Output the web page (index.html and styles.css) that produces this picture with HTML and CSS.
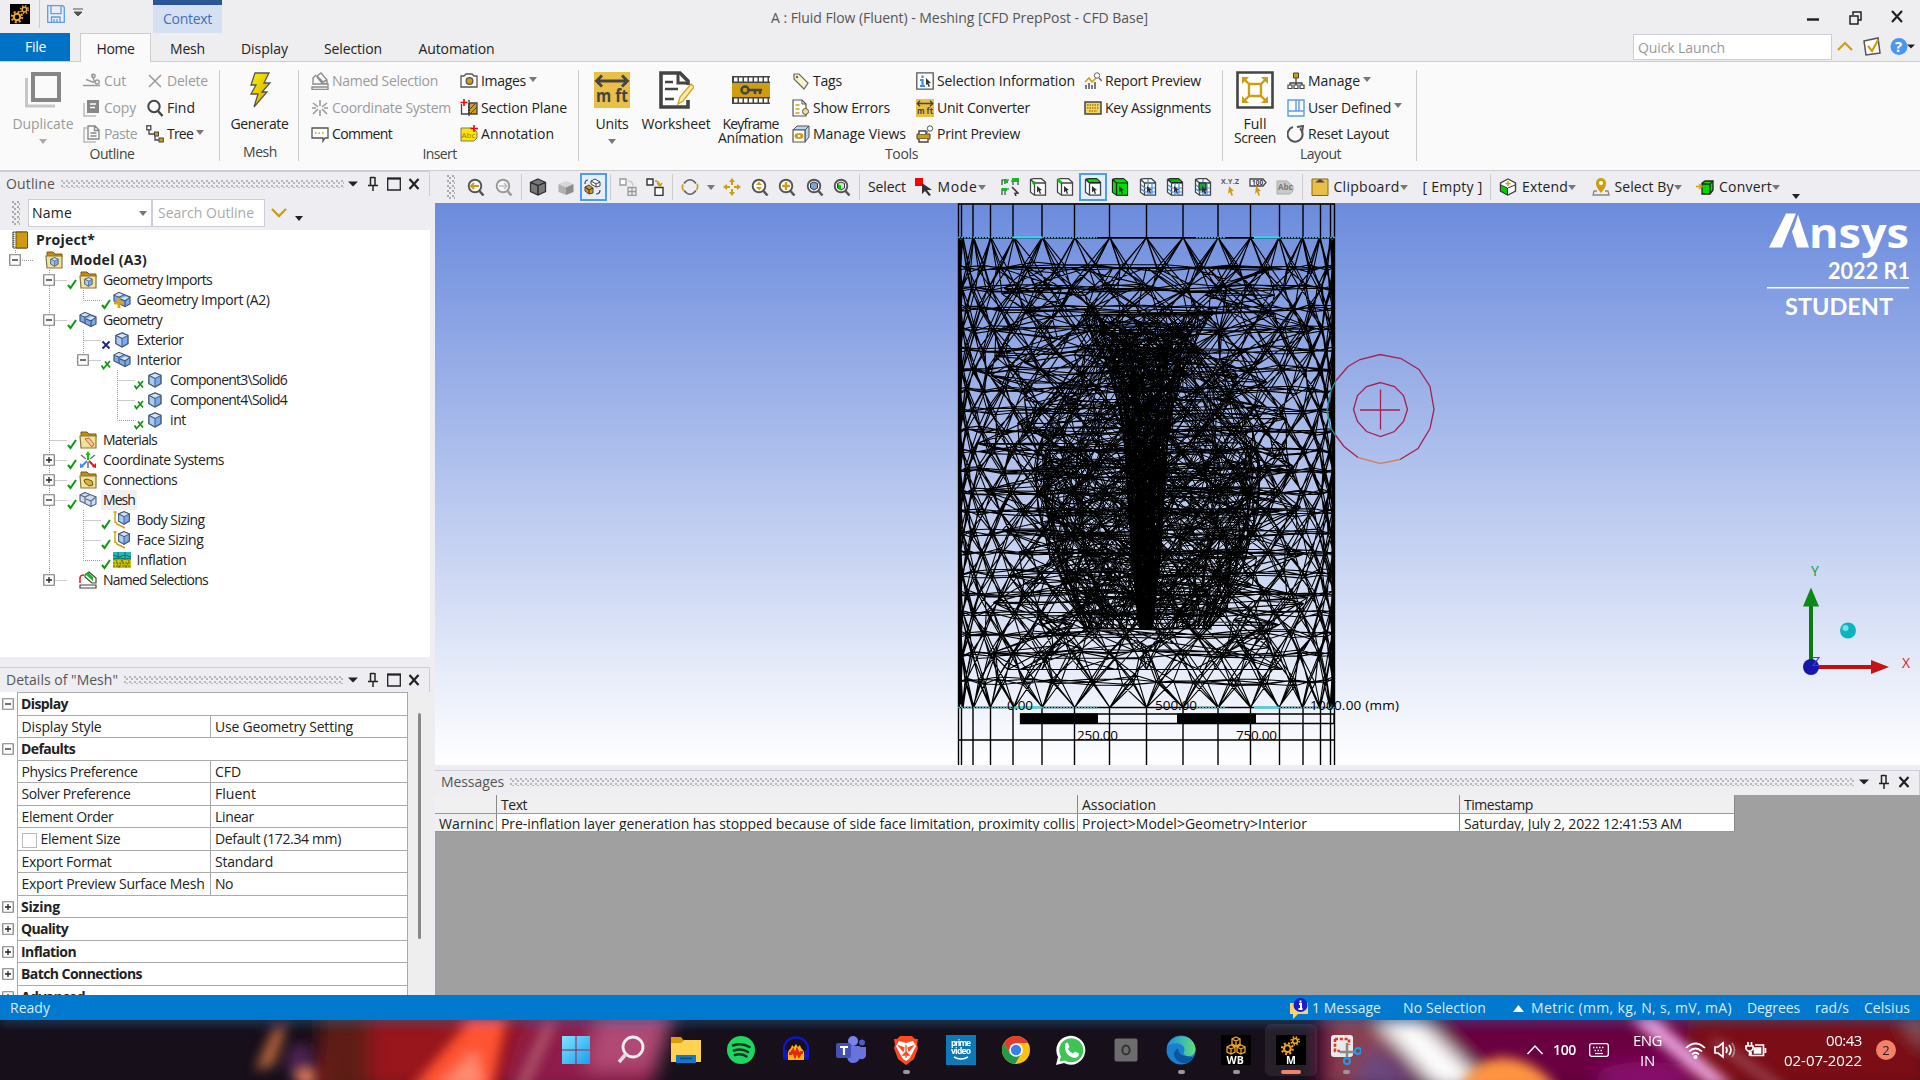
FILE: index.html
```html
<!DOCTYPE html>
<html lang="en">
<head>
<meta charset="utf-8">
<title>A : Fluid Flow (Fluent) - Meshing</title>
<link rel="stylesheet" href="styles.css">
</head>
<body>
<svg class="paints" width="0" height="0">
  <defs>
    <linearGradient id="bolt" x1="0" y1="0" x2="1" y2="1"><stop offset="0" stop-color="#fff200"/><stop offset="1" stop-color="#c9a200"/></linearGradient>
    <linearGradient id="sky" x1="0" y1="0" x2="0" y2="1"><stop offset="0" stop-color="#6b8bdd"/><stop offset="1" stop-color="#fff"/></linearGradient>
    <linearGradient id="edgeg" x1="0" y1="0" x2="1" y2="0"><stop offset="0" stop-color="#1b8fe0"/><stop offset="1" stop-color="#5fe07a"/></linearGradient>
    <linearGradient id="win" x1="0" y1="0" x2="1" y2="1"><stop offset="0" stop-color="#7fe4ff"/><stop offset="1" stop-color="#1a9df0"/></linearGradient>
    <filter id="soft" x="-20%" y="-60%" width="140%" height="220%"><feGaussianBlur stdDeviation="9"/></filter>
    <filter id="soft2" x="-20%" y="-60%" width="140%" height="220%"><feGaussianBlur stdDeviation="6"/></filter>
  </defs>
</svg>
<svg class="symbols">
  <symbol id="gears" viewBox="0 0 20 20"><g fill="none" stroke="#f2a81d"><circle cx="7" cy="13" r="3.2" stroke-width="2"/><circle cx="7" cy="13" r="5.2" stroke-width="2" stroke-dasharray="2 2.08"/><circle cx="14.4" cy="5.6" r="2.3" stroke-width="1.5"/><circle cx="14.4" cy="5.6" r="3.8" stroke-width="1.5" stroke-dasharray="1.5 1.5"/></g></symbol>
  <symbol id="save" viewBox="0 0 18 18"><path d="M.7.7h15l1.6 1.6v15H.7zM4 .7v8h10v-8M4.5 17v-5h8.500v5M7 17v-3M10 17v-3" fill="none" stroke="#5b9bf0" stroke-width="1.3"/></symbol>
  <symbol id="dup" viewBox="0 0 36 36"><path d="M1.500 6v28H30" fill="none" stroke="#c6c6c6" stroke-width="3"/><rect x="8" y="2" width="26" height="26" fill="none" stroke="#868686" stroke-width="4"/></symbol>
  <symbol id="cut" viewBox="0 0 18 18"><g fill="none" stroke="#9a9a9a" stroke-width="1.5"><path d="M0 13.500h17M3 7.500 11 10.500M9 2l2.500 8"/><circle cx="10.500" cy="4" r="1.700"/><circle cx="14.200" cy="10" r="2"/></g></symbol>
  <symbol id="copy" viewBox="0 0 18 18"><path d="M1 4v13h12" fill="none" stroke="#bbb" stroke-width="1.5"/><path d="M4 1h12v13H4z" fill="#888"/><path d="M7 5h6M7 8.500h5" stroke="#fff" stroke-width="1.5"/></symbol>
  <symbol id="paste" viewBox="0 0 18 18"><path d="M4 3H1v14h12" fill="none" stroke="#bbb" stroke-width="1.500"/><path d="M5 1h7l4 4v9H5zM11.500 1v4.500H16M7.500 8h6M7.500 11h6" fill="none" stroke="#888" stroke-width="1.400"/></symbol>
  <symbol id="del" viewBox="0 0 18 18"><path d="m3 3 12 12M15 3 3 15" stroke="#9a9a9a" stroke-width="1.500"/></symbol>
  <symbol id="find" viewBox="0 0 18 18"><circle cx="8" cy="7.500" r="5.700" fill="none" stroke="#454545" stroke-width="2"/><path d="m12 12 4.500 5" stroke="#454545" stroke-width="2.500"/></symbol>
  <symbol id="treei" viewBox="0 0 18 18"><path d="M3 4v5h6v6h4M9 9h2" fill="none" stroke="#444" stroke-width="1.300"/><rect x=".8" y=".8" width="4" height="4" fill="#fff" stroke="#444" stroke-width="1.300"/><rect x="8.500" y="7" width="4" height="4" fill="#cf9d12" stroke="#444"/><rect x="13" y="13" width="4.300" height="4" fill="#cf9d12" stroke="#444"/></symbol>
  <symbol id="gen" viewBox="0 0 24 36"><path d="M7 1h14l-5 10h6l-8 9h5L6 35l4-13H3l5-9H3z" fill="url(#bolt)" stroke="#555" stroke-width="1.300"/></symbol>
  <symbol id="named" viewBox="0 0 18 18"><path d="M1 15h16v2.500H1zM1 12h16v2M6 4l4-3 6 7v4l-5-1-5-6zM6 4l6 6 4-2M2 11V6l3-3" fill="none" stroke="#8d8d8d" stroke-width="1.400"/></symbol>
  <symbol id="coordg" viewBox="0 0 18 18"><path d="M9 1v6M9 11v6M2 4l5 4M16 4l-5 4M2 15l5-5M16 15l-5-5M1 9h4M13 9h4" stroke="#9a9a9a" stroke-width="1.600"/></symbol>
  <symbol id="comment" viewBox="0 0 18 18"><path d="M1 3h16v10h-3l-2 3v-3H1z" fill="#fff" stroke="#555" stroke-width="1.300"/><path d="M4 8h9" stroke="#cf9d12" stroke-width="1.500" stroke-dasharray="1.500 2"/></symbol>
  <symbol id="camera" viewBox="0 0 18 18"><path d="M1 4h3l2-2h6l2 2h3v11H1z" fill="#fff" stroke="#555" stroke-width="1.300"/><circle cx="9.500" cy="9" r="4" fill="#555"/><circle cx="9.500" cy="9" r="2.700" fill="#cf9d12"/></symbol>
  <symbol id="section" viewBox="0 0 18 18"><path d="M1.500 5v10H9V4" fill="none" stroke="#444" stroke-width="1.300"/><path d="M9 4h8v11H9z" fill="#cf9d12" stroke="#444" stroke-width="1.300"/><path d="m9 11 6-6M10 15l7-7" stroke="#444"/><path d="M9 1v16" stroke="#333" stroke-width="1.300" stroke-dasharray="2 1"/><path d="M4 0v7M.5 3.500h7" stroke="#f00" stroke-width="1.600"/></symbol>
  <symbol id="annot" viewBox="0 0 18 18"><path d="M1 3h11l5 4v6l-3 3H1z" fill="#ffe600" stroke="#777"/><text x="1.500" y="12.500" font-size="8" font-family="Open Sans" fill="#917a00">Abc</text><path d="M14 0v7M10.500 3.500H18" stroke="#f00" stroke-width="1.600"/></symbol>
  <symbol id="units" viewBox="0 0 36 36"><path d="M0 0h36v36H0z" fill="#e8bf48"/><path d="M3 9h30M8 3.500 2.500 9 8 14.500M28 3.500 33.500 9 28 14.500" fill="none" stroke="#444" stroke-width="2.800"/><text x="2" y="30" font-size="18" font-weight="700" font-family="Open Sans" fill="#444" textLength="32" lengthAdjust="spacingAndGlyphs">m ft</text></symbol>
  <symbol id="worksheet" viewBox="0 0 36 38"><path d="M30 14v-4l-8-8H3v34h27v-7" fill="#fff" stroke="#444" stroke-width="3.600"/><path d="M20 2v10h10" fill="none" stroke="#444" stroke-width="3"/><path d="M7 11h8M7 18h13M7 28h9" stroke="#444" stroke-width="2.400"/><path d="m20 33 2-7 11-13 3 3-11 14z" fill="#fbe9b8" stroke="#d5a21b" stroke-width="1.300"/></symbol>
  <symbol id="keyframe" viewBox="0 0 38 28"><path d="M0 0h38v28H0z" fill="#444"/><path d="M0 7h38v14H0z" fill="#cf9d12"/><path d="M2 3.500h36M2 24.500h36" stroke="#fff" stroke-width="4" stroke-dasharray="3.500 1.500"/><circle cx="13" cy="14" r="3.500" fill="none" stroke="#444" stroke-width="2.500"/><path d="M16 14h14M23 14v4M28 14v4" stroke="#444" stroke-width="2.500"/></symbol>
  <symbol id="tag" viewBox="0 0 18 18"><path d="M2 2h5l9 9-4 6-10-10z" fill="#fdf3c8" stroke="#666" stroke-width="1.200"/><circle cx="5" cy="5" r="1.200" fill="#666"/></symbol>
  <symbol id="showerr" viewBox="0 0 18 18"><path d="M1 1h9l4 4v12H1z" fill="#fff" stroke="#555" stroke-width="1.200"/><path d="M3.500 6h4M3.500 10h4M3.500 14h4" stroke="#cf9d12" stroke-width="1.400"/><path d="M10 1v4h4" fill="none" stroke="#555"/><circle cx="13.500" cy="12.500" r="3" fill="#f5dc8a" stroke="#555"/></symbol>
  <symbol id="views" viewBox="0 0 18 18"><path d="m1 5 4-4h12l-4 4zM13 5l4-4v11l-4 5z" fill="#bcd4f4" stroke="#555"/><path d="M1 5h12v12H1z" fill="#fff" stroke="#555" stroke-width="1.200"/><ellipse cx="7" cy="11" rx="4.500" ry="3" fill="#cf9d12"/><circle cx="7" cy="11" r="1.300" fill="#fff"/></symbol>
  <symbol id="selinfo" viewBox="0 0 18 18"><path d="M.8.8h16.400v16.400H.8z" fill="#fff" stroke="#555" stroke-width="1.300"/><path d="M4 8h2.500v6M4 14h5M6.500 3.500v2.500" stroke="#3d8bf2" stroke-width="2.200" fill="none"/><path d="m10 6 5 5-2.500.3 1.500 3-1.300.7-1.400-3L10 13z" fill="#333"/></symbol>
  <symbol id="printp" viewBox="0 0 18 18"><path d="M1 9h13v5H1z" fill="#cf9d12" stroke="#444"/><path d="M3 9V6h7v3M3 14v3h9v-3" fill="#fff" stroke="#444" stroke-width="1.400"/><circle cx="14" cy="3.500" r="2.700" fill="none" stroke="#555"/><path d="m12 6-2 3" stroke="#555"/></symbol>
  <symbol id="report" viewBox="0 0 18 18"><path d="M2 17v-4M5 17v-6M8 17v-4M11 17v-7" stroke="#444" stroke-width="1.400"/><path d="m1 10 4-4 3 4 5-5" stroke="#cf9d12" stroke-width="1.500" fill="none"/><circle cx="13" cy="3.500" r="2.700" fill="#fff" stroke="#666"/><path d="m15 6 3 3" stroke="#666" stroke-width="1.500"/></symbol>
  <symbol id="keys" viewBox="0 0 18 18"><path d="M1 3h16v12H1z" fill="#f4d46a" stroke="#444" stroke-width="1.500"/><path d="M3 6h12M3 9h12M5 12h8" stroke="#a67b00" stroke-width="1.500" stroke-dasharray="1.500 1"/></symbol>
  <symbol id="full" viewBox="0 0 38 38"><path d="M1.500 1.500h35v35h-35z" fill="#fff" stroke="#444" stroke-width="2.600"/><path d="M13 13h12v12H13zM13 13 8 8M25 13l5-5M13 25l-5 5M25 25l5 5" fill="none" stroke="#cf9d12" stroke-width="2.400"/><path d="M6 6h7l-7 7zM32 6h-7l7 7zM6 32h7l-7-7zM32 32h-7l7-7z" fill="#cf9d12"/></symbol>
  <symbol id="manage" viewBox="0 0 18 18"><path d="M9 6v5M3 14v-3h12v3M9 11v3" fill="none" stroke="#444" stroke-width="1.300"/><path d="M6.500 1h5v5h-5z" fill="#cf9d12" stroke="#444"/><path d="M1 13h4v3.500H1zM7 13h4v3.500H7zM13 13h4v3.500h-4z" fill="#fff" stroke="#444" stroke-width="1.200"/></symbol>
  <symbol id="userdef" viewBox="0 0 18 18"><path d="M1 1h16v16H1zM1 12h16M9 1v11M12 1v11" fill="none" stroke="#5b9bf0" stroke-width="1.400"/></symbol>
  <symbol id="reset" viewBox="0 0 18 18"><path d="M6 2A7.500 7.500 0 1 0 13 3.500" fill="none" stroke="#555" stroke-width="2"/><path d="m10 2 6-1-1 6" fill="none" stroke="#555" stroke-width="2"/></symbol>
  <symbol id="mag" viewBox="0 0 18 18"><circle cx="8" cy="8" r="6.300" fill="#fff" stroke="#555" stroke-width="1.900"/><path d="m12.500 13 4 4.500" stroke="#555" stroke-width="2.500"/></symbol>
  <symbol id="zprev" viewBox="0 0 18 18"><use href="#mag"/><path d="M4 8h8M7 5 4 8l3 3" stroke="#cf9d12" stroke-width="2" fill="none"/></symbol>
  <symbol id="znext" viewBox="0 0 18 18"><g opacity=".55"><use href="#mag"/><path d="M4 8h8M9 5l3 3-3 3" stroke="#999" stroke-width="1.500" fill="none"/></g></symbol>
  <symbol id="zfit" viewBox="0 0 18 18"><use href="#mag"/><path d="M8 3.500 5 7h6zM8 12.500 5 9h6z" fill="#cf9d12"/></symbol>
  <symbol id="zin" viewBox="0 0 18 18"><use href="#mag"/><path d="M8 4v8M4 8h8" stroke="#cf9d12" stroke-width="2.400"/></symbol>
  <symbol id="zbox" viewBox="0 0 18 18"><use href="#mag"/><path d="m8 4 3.500 1.500v4.500L8 12l-3.500-2V5.500z" fill="#7ba4df" stroke="#333"/></symbol>
  <symbol id="zgreen" viewBox="0 0 18 18"><use href="#mag"/><path d="m8 4 3.500 1.500v4.500L8 12l-3.500-2V5.500z" fill="#ddd" stroke="#333"/><path d="M5 6l3 1.500V12l-3-2z" fill="#0c0"/></symbol>
  <symbol id="cubed" viewBox="0 0 18 18"><path d="m9 1 7.500 3.500v9L9 17l-7.500-3.500v-9z" fill="#777" stroke="#333" stroke-width="1.300"/><path d="m1.500 4.500 7.500 3v9.500M9 7.500l7.500-3" fill="none" stroke="#222" stroke-width="1.300"/></symbol>
  <symbol id="cubel" viewBox="0 0 18 18"><path d="m9 3 7.500 3L9 9.500 1.500 6z" fill="#d5d5d5"/><path d="M1.500 6 9 9.500V17l-7.500-3z" fill="#b0b0b0"/><path d="M16.500 6 9 9.500V17l7.500-3z" fill="#8c8c8c"/></symbol>
  <symbol id="swap" viewBox="0 0 18 18"><path d="m7 3 4-2 5 3v4l-4 1-5-3zM7 3l5 3 4-2M12 6v3" fill="#fff" stroke="#444"/><path d="m1 9 4-2 4 3v5l-4 1-4-3z" fill="#cf9d12" stroke="#444"/><path d="M1 9l4 3 4-2M5 12v4M1 6q0-4 3-4M12 16q4 0 4-4" fill="none" stroke="#444" stroke-width="1.200"/></symbol>
  <symbol id="boxa" viewBox="0 0 18 18"><path d="M1 1h6v6H1z" fill="#fff" stroke="#999" stroke-width="1.300"/><path d="M9 9.500h8v8H9zM13 9v8M9 13.500h8" fill="none" stroke="#999" stroke-width="1.300"/><path d="M9 3q5 0 5 5" fill="none" stroke="#ccc" stroke-width="1.600"/></symbol>
  <symbol id="boxb" viewBox="0 0 18 18"><path d="M1 1h6v6H1zM9 9.500h8v8H9z" fill="#fff" stroke="#333" stroke-width="1.400"/><path d="M9 3q4 0 4.500 4M11 5l3 3 2-3" fill="none" stroke="#cf9d12" stroke-width="1.600"/></symbol>
  <symbol id="rot" viewBox="0 0 18 18"><path d="M3 5.500Q9-2 15 5.500M15 12.500q-6 7.500-12 0" fill="none" stroke="#666" stroke-width="1.700"/><path d="M2 6.500q-1.500 3 .5 6M16 6q1.500 3-.5 6" fill="none" stroke="#cf9d12" stroke-width="1.700"/></symbol>
  <symbol id="pan" viewBox="0 0 18 18"><path d="m9 0 3 4H6zM9 18l3-4H6zM0 9l4-3v6zM18 9l-4-3v6z" fill="#cf9d12"/><path d="M9 4v3M9 11v3M4 9h3M11 9h3" stroke="#cf9d12" stroke-width="2"/></symbol>
  <symbol id="modei" viewBox="0 0 18 18"><path d="M0 0h8v8H0z" fill="#f00"/><path d="m7 5 10 7h-5l4 5-2 1-4-5-3 3z" fill="#333"/></symbol>
  <symbol id="cur" viewBox="0 0 18 18"><path d="m8 8 5 4-2 .5 1 3-1.200.5-1.100-3L8 14.500z" fill="#333"/></symbol>
  <symbol id="wire" viewBox="0 0 18 18"><path d="m1.500 1.500 3-.8h8l4 3.500v13h-11l-4-3zM1.500 1.500 5.500 5h11M5.500 5v12" fill="#fff" stroke="#444" stroke-width="1.300"/></symbol>
  <symbol id="sfil" viewBox="0 0 18 18"><path d="M1 7V2h7M10 3h7v4M1 17v-6h7M4 1v5M12 1v6M4 10v7" fill="none" stroke="#444" stroke-width="1.200"/><path d="M11 0h7v4h-7zM1 10h5v3H1zM3 2h4v3H3z" fill="#16b72b"/><path d="m11 9 6 6-3 .3 1 3" stroke="#333" fill="none" stroke-width="1.500"/></symbol>
  <symbol id="sv" viewBox="0 0 18 18"><use href="#wire"/><circle cx="5" cy="5" r="1.800" fill="#0b0"/><use href="#cur"/></symbol>
  <symbol id="se" viewBox="0 0 18 18"><use href="#wire"/><path d="M1.500 1.500 5.500 5" stroke="#0c0" stroke-width="2.500"/><use href="#cur"/></symbol>
  <symbol id="sf" viewBox="0 0 18 18"><use href="#wire"/><path d="m2 1.500 3-.8h8l3.500 3.800h-11z" fill="#0d0" stroke="#222"/><use href="#cur"/></symbol>
  <symbol id="sb" viewBox="0 0 18 18"><use href="#wire"/><path d="m1.500 1.500 3-.8h8l4 3.500v13h-11l-4-3z" fill="#0d0" stroke="#222"/><path d="M1.500 1.500 5.500 5h11M5.500 5v12" fill="none" stroke="#222" stroke-width="1.200"/><use href="#cur"/></symbol>
  <symbol id="sn" viewBox="0 0 18 18"><use href="#wire"/><path d="M9 1v16M13 4v13M2 7l4 3h10M2 11l4 3h10" stroke="#3f8bea" stroke-width="1.200" fill="none"/><use href="#cur"/></symbol>
  <symbol id="snf" viewBox="0 0 18 18"><use href="#sn"/><path d="m2 1.500 3-.8h8l3.500 3.800h-11z" fill="#0b0" stroke="#222"/></symbol>
  <symbol id="sne" viewBox="0 0 18 18"><use href="#sn"/><path d="M5 5h7v7H5z" fill="#15a92a" stroke="#222"/><use href="#cur"/></symbol>
  <symbol id="xyz" viewBox="0 0 18 18"><text x="0" y="6" font-size="7" font-family="Open Sans" fill="#555" textLength="18">X.Y.Z</text><path d="m8 8 5 5-2.500.3 1.500 4-1.500.7-1.500-4L7 16z" fill="#cf9d12"/></symbol>
  <symbol id="lbl" viewBox="0 0 18 18"><path d="M1 1h13l3 3.500L14 8H1z" fill="#fff" stroke="#444" stroke-width="1.300"/><text x="3" y="7" font-size="6.500" font-weight="700" font-family="Open Sans" fill="#333">100</text><path d="m7 8 5 5-2.500.3 1.500 4-1.500.7-1.500-4L6 16z" fill="#cf9d12"/></symbol>
  <symbol id="abc" viewBox="0 0 18 18"><path d="M1 3h10l6 5v5l-3 3H1z" fill="#c9c9c9" stroke="#aaa"/><text x="2" y="12" font-size="8" font-family="Open Sans" fill="#777">Abc</text></symbol>
  <symbol id="clip" viewBox="0 0 18 18"><path d="M1 1h16v16.500H1z" fill="#e8bf48" stroke="#8a6a10"/><path d="M4 4.500h10L9 1z" fill="#444"/></symbol>
  <symbol id="extend" viewBox="0 0 18 18"><path d="m9 1 7.500 4v8L9 17l-7.500-4V5z" fill="#fff" stroke="#444" stroke-width="1.400"/><path d="m1.500 7 7 3v7l-7-4z" fill="#0c0" stroke="#333"/><path d="m9 10 7-3" stroke="#333"/><path d="M9 3v5M6.500 5.500h5" stroke="#cf9d12" stroke-width="1.400"/></symbol>
  <symbol id="pinm" viewBox="0 0 18 18"><path d="M9 15C4 9 4 7 4 5a5 5 0 0 1 10 0c0 2 0 4-5 10z" fill="#cf9d12"/><circle cx="9" cy="5" r="2" fill="#fff"/><path d="M5 13H2l-1 4h16l-1-4h-3" fill="none" stroke="#888" stroke-width="1.300"/></symbol>
  <symbol id="conv" viewBox="0 0 18 18"><path d="m6 5 3-2h8v9l-3 4H6z" fill="#0d0" stroke="#222" stroke-width="1.300"/><path d="M6 6h8v10M14 6l3-3" fill="none" stroke="#222" stroke-width="1.300"/><path d="M0 8.500h5M3 6l3 2.500L3 11" stroke="#cf9d12" stroke-width="1.500" fill="none"/></symbol>
  <symbol id="book" viewBox="0 0 18 18"><path d="M2 1h14v16H2z" fill="#fff" stroke="#555"/><path d="M5 1h11.500v16H5z" fill="#cf9a0e" stroke="#6d5308"/><path d="M2.500 1v16" stroke="#666" stroke-dasharray="1 1" stroke-width="2"/></symbol>
  <symbol id="folder" viewBox="0 0 18 18"><path d="M2 6V1h6l2 2h7v3z" fill="#c08c10" stroke="#7a5c10"/><path d="M1 5h16v12H2z" fill="#f3e29a" stroke="#857640" stroke-width="1.200"/></symbol>
  <symbol id="cube" viewBox="0 0 18 18"><path d="m9 2 6 2.500v8L9 16l-6-3.500v-8z" fill="#79abf3" stroke="#46566e" stroke-width="1.400"/><path d="m3 4.500 6-2.500 6 2.500L9 7.500z" fill="#d3e4fb" stroke="#46566e"/><path d="M3 4.500 9 7.500V16l-6-3.500z" fill="#a9c9f7" stroke="#46566e"/></symbol>
  <symbol id="fcube" viewBox="0 0 18 18"><use href="#folder"/><use href="#cube" x="4" y="5.500" width="11" height="11"/></symbol>
  <symbol id="fmat" viewBox="0 0 18 18"><use href="#folder"/><path d="m6 8 4-1 5 6-2 3z" fill="#f6c79c" stroke="#b06a3c"/></symbol>
  <symbol id="fcon" viewBox="0 0 18 18"><use href="#folder"/><path d="m5 9 3-1 5 2 1 4-4 1-4-3z" fill="#d8b13a" stroke="#6b5a20"/></symbol>
  <symbol id="geo" viewBox="0 0 18 18"><path d="m1 4 5-2.500 5 2 6 2.500v7l-5 2.500L7 13l-6-3z" fill="#79abf3" stroke="#46566e" stroke-width="1.200"/><path d="m1 4 5 2 5-2.500M6 6v6M7 8l5 2 5-4M12 10v5.500" fill="none" stroke="#46566e" stroke-width="1.200"/><path d="m1.800 4 4.300-2 4 1.700L6 5.600zM8 7.500l4-2 4 1-4 2.500z" fill="#d3e4fb"/></symbol>
  <symbol id="meshi" viewBox="0 0 18 18"><path d="m1 4 5-2.500 5 2 6 2.500v7l-5 2.500L7 13l-6-3z" fill="#ccdcf4" stroke="#5d6b80" stroke-width="1.200"/><path d="m1 4 5 2 5-2.500M6 6v6M7 8l5 2 5-4M12 10v5.500" fill="none" stroke="#5d6b80" stroke-width="1.200"/></symbol>
  <symbol id="geoimp" viewBox="0 0 18 18"><use href="#geo"/><path d="M6 7v10M1 12h10" stroke="#d9a415" stroke-width="2.800"/></symbol>
  <symbol id="coord" viewBox="0 0 18 18"><path d="M9 9V2" stroke="#0c0" stroke-width="2"/><path d="m9 0 2.500 4h-5z" fill="#0c0"/><path d="m2 4 5 4M16 4l-5 4M9 11v6" stroke="#777" stroke-width="1.600"/><path d="m8 10-5 5" stroke="#3f8bea" stroke-width="2"/><path d="M1 17v-5l4 4z" fill="#3f8bea"/><path d="m10 10 5 5" stroke="#e11" stroke-width="2"/><path d="M17 17v-5l-4 4z" fill="#e11"/></symbol>
  <symbol id="sizing" viewBox="0 0 18 18"><use href="#cube" x="3" y="-1" width="16" height="16"/><path d="M2 1v11M.5 1h3M4 13l8 4M3 11l1.500 3" fill="none" stroke="#cf9d12" stroke-width="1.400"/></symbol>
  <symbol id="infl" viewBox="0 0 18 18"><path d="M0 1h18v8H0z" fill="#23b9b5"/><path d="M0 9h18v8H0z" fill="#cfc400"/><path d="m0 4 6 2 6-2 6 2M0 8l6-1 6 1 6-1M5 1v7M12 1v7" stroke="#0b6f70" fill="none"/><path d="M0 12h18M0 15h18M3 9l3 8M9 9l-3 8M9 9l4 8M16 9l-3 8" stroke="#736b00" stroke-dasharray="2 1" fill="none"/></symbol>
  <symbol id="namedc" viewBox="0 0 18 18"><path d="M1 14h16v3H1z" fill="#fff" stroke="#444" stroke-width="1.200"/><path d="m6 4 4-3 7 6v5h-4L6 6z" fill="#fff" stroke="#444" stroke-width="1.200"/><path d="m6 3 3-2 5 5v4z" fill="#1db51d"/><path d="M1 12V7q0-3 4-3" stroke="#e22" fill="none" stroke-width="1.600"/></symbol>
  <symbol id="ok" viewBox="0 0 10 12"><path d="m1 7 2.500 3L9 2" fill="none" stroke="#129512" stroke-width="2"/></symbol>
  <symbol id="xb" viewBox="0 0 10 12"><path d="m1.500 3.500 7 7M8.500 3.500l-7 7" stroke="#15277f" stroke-width="1.800"/></symbol>
  <symbol id="okx" viewBox="0 0 10 12"><path d="m.5 7.500 2 3L9 3M4 3.500l5 6" fill="none" stroke="#129512" stroke-width="1.700"/></symbol>
  <symbol id="plus" viewBox="0 0 12 12"><path d="M.75.75h10.500v10.500H.75z" fill="#fff" stroke="#7d7d7d" stroke-width="1.200"/><path d="M3 6h6M6 3v6" stroke="#222" stroke-width="1.300"/></symbol>
  <symbol id="minus" viewBox="0 0 12 12"><path d="M.75.75h10.500v10.500H.75z" fill="#fff" stroke="#7d7d7d" stroke-width="1.200"/><path d="M3 6h6" stroke="#222" stroke-width="1.300"/></symbol>
  <symbol id="wmenu" viewBox="0 0 10 16"><path d="M0 5.500h10l-5 5z" fill="#222"/></symbol>
  <symbol id="wpin" viewBox="0 0 10 16"><path d="M2.500 1v8M2.500 1.500h4M7 1v8M0 9.500h10M5 10v5" stroke="#222" stroke-width="1.500" fill="none"/></symbol>
  <symbol id="wmax" viewBox="0 0 14 16"><path d="M.7 2.500h12.600v11.500H.7z" fill="none" stroke="#222" stroke-width="1.300"/><path d="M0 2.500h14" stroke="#222" stroke-width="2"/></symbol>
  <symbol id="wx" viewBox="0 0 12 16"><path d="m1.500 3 9 10M10.500 3l-9 10" stroke="#222" stroke-width="2.200"/></symbol>
</svg>

<header class="titlebar">
  <div class="quick">
    <span class="appicon"><svg width="20" height="20"><use href="#gears"/></svg></span>
    <span class="vline"></span>
    <svg width="18" height="18"><use href="#save"/></svg>
    <svg class="qdrop" width="10" height="9" viewBox="0 0 10 9"><path d="M0 1h10M1 4h8L5 8z" stroke="#555" fill="#555"/></svg>
  </div>
  <div class="context"><span data-w="49">Context</span></div>
  <div class="caption"><span data-w="377">A : Fluid Flow (Fluent) - Meshing [CFD PrepPost - CFD Base]</span></div>
  <div class="winbtns">
    <svg width="100" height="16" viewBox="0 0 100 16"><path d="M1 10.500h12" stroke="#222" stroke-width="2.500"/><path d="M44 7h8v8h-8zM47 6V3h8v8h-3" fill="none" stroke="#222" stroke-width="1.500"/><path d="m86 2 10 11M96 2 86 13" stroke="#222" stroke-width="2.200"/></svg>
  </div>
</header>
<nav class="tabs">
  <span class="file"><span data-w="21">File</span></span>
  <span class="tab active"><span data-w="38">Home</span></span>
  <span class="tab t2"><span data-w="35">Mesh</span></span>
  <span class="tab t3"><span data-w="47">Display</span></span>
  <span class="tab t4"><span data-w="58">Selection</span></span>
  <span class="tab t5"><span data-w="76">Automation</span></span>
  <div class="launch"><span data-w="87">Quick Launch</span></div>
  <svg class="helpers" width="80" height="22" viewBox="0 0 80 22"><path d="m2 15 7-7 7 7" fill="none" stroke="#cf9d12" stroke-width="2.200"/><path d="m28 6 14-3 2 15-14 2z" fill="#fff" stroke="#555" stroke-width="1.500"/><path d="m32 11 4 5 6-11" fill="none" stroke="#cf9d12" stroke-width="2.200"/><circle cx="63" cy="11.500" r="8.500" fill="#4b97ee"/><text x="59" y="17" font-family="Open Sans" font-size="15" font-weight="700" fill="#fff">?</text><path d="M71 9.500h8l-4 4z" fill="#222"/></svg>
</nav>

<section class="ribbon">
  <div class="group g-outline">
    <div class="cols">
      <div class="big dim"><svg width="36" height="36"><use href="#dup"/></svg><span data-w="61">Duplicate</span><i class="dd"></i></div>
      <div class="col dim">
        <div class="btn"><svg><use href="#cut"/></svg><span data-w="22">Cut</span></div>
        <div class="btn"><svg><use href="#copy"/></svg><span data-w="32">Copy</span></div>
        <div class="btn"><svg><use href="#paste"/></svg><span data-w="33">Paste</span></div>
      </div>
      <div class="col">
        <div class="btn dim"><svg><use href="#del"/></svg><span data-w="41">Delete</span></div>
        <div class="btn"><svg><use href="#find"/></svg><span data-w="28">Find</span></div>
        <div class="btn"><svg><use href="#treei"/></svg><span data-w="26">Tree</span><i class="dd"></i></div>
      </div>
    </div>
    <div class="gname"><span data-w="45">Outline</span></div>
  </div>
  <div class="group g-mesh">
    <div class="cols"><div class="big"><svg width="24" height="36"><use href="#gen"/></svg><span data-w="58">Generate</span></div></div>
    <div class="gname"><span data-w="34">Mesh</span></div>
  </div>
  <div class="group g-insert">
    <div class="cols">
      <div class="col">
        <div class="btn dim"><svg><use href="#named"/></svg><span data-w="106">Named Selection</span></div>
        <div class="btn dim"><svg><use href="#coordg"/></svg><span data-w="119">Coordinate System</span></div>
        <div class="btn"><svg><use href="#comment"/></svg><span data-w="60">Comment</span></div>
      </div>
      <div class="col">
        <div class="btn"><svg><use href="#camera"/></svg><span data-w="45">Images</span><i class="dd"></i></div>
        <div class="btn"><svg><use href="#section"/></svg><span data-w="86">Section Plane</span></div>
        <div class="btn"><svg><use href="#annot"/></svg><span data-w="73">Annotation</span></div>
      </div>
    </div>
    <div class="gname"><span data-w="34">Insert</span></div>
  </div>
  <div class="group g-tools">
    <div class="cols">
      <div class="big units"><svg width="36" height="36"><use href="#units"/></svg><span data-w="33">Units</span><i class="dd"></i></div>
      <div class="big"><svg width="36" height="38"><use href="#worksheet"/></svg><span data-w="69">Worksheet</span></div>
      <div class="big"><svg class="kf" width="38" height="28"><use href="#keyframe"/></svg><span data-w="56">Keyframe</span><span data-w="65">Animation</span></div>
      <div class="col">
        <div class="btn"><svg><use href="#tag"/></svg><span data-w="29">Tags</span></div>
        <div class="btn"><svg><use href="#showerr"/></svg><span data-w="77">Show Errors</span></div>
        <div class="btn"><svg><use href="#views"/></svg><span data-w="93">Manage Views</span></div>
      </div>
      <div class="col">
        <div class="btn"><svg><use href="#selinfo"/></svg><span data-w="138">Selection Information</span></div>
        <div class="btn"><svg><use href="#units"/></svg><span data-w="93">Unit Converter</span></div>
        <div class="btn"><svg><use href="#printp"/></svg><span data-w="83">Print Preview</span></div>
      </div>
      <div class="col">
        <div class="btn"><svg><use href="#report"/></svg><span data-w="96">Report Preview</span></div>
        <div class="btn"><svg><use href="#keys"/></svg><span data-w="106">Key Assignments</span></div>
      </div>
    </div>
    <div class="gname"><span data-w="33">Tools</span></div>
  </div>
  <div class="group g-layout">
    <div class="cols">
      <div class="big"><svg width="38" height="38"><use href="#full"/></svg><span data-w="23">Full</span><span data-w="42">Screen</span></div>
      <div class="col">
        <div class="btn"><svg><use href="#manage"/></svg><span data-w="52">Manage</span><i class="dd"></i></div>
        <div class="btn"><svg><use href="#userdef"/></svg><span data-w="83">User Defined</span><i class="dd"></i></div>
        <div class="btn"><svg><use href="#reset"/></svg><span data-w="81">Reset Layout</span></div>
      </div>
    </div>
    <div class="gname"><span data-w="41">Layout</span></div>
  </div>
</section>

<main class="work">
  <aside class="left">
    <div class="phead"><span data-w="49">Outline</span><i class="dots"></i>
      <svg width="10" height="16"><use href="#wmenu"/></svg><svg width="10" height="16"><use href="#wpin"/></svg><svg width="14" height="16"><use href="#wmax"/></svg><svg width="12" height="16"><use href="#wx"/></svg></div>
    <div class="filter"><i class="grip"></i><div class="combo"><span data-w="40">Name</span><i class="dd"></i></div><div class="search"><span data-w="96">Search Outline</span></div>
      <svg width="16" height="12" viewBox="0 0 16 12"><path d="m1 2 7 7 7-7" fill="none" stroke="#cf9d12" stroke-width="2.400"/></svg><svg class="more" width="8" height="5" viewBox="0 0 8 5"><path d="M0 0h8L4 5z" fill="#222"/></svg></div>
    <div class="tree" id="tree"></div>
    <div class="phead details-head"><span data-w="112">Details of "Mesh"</span><i class="dots"></i>
      <svg width="10" height="16"><use href="#wmenu"/></svg><svg width="10" height="16"><use href="#wpin"/></svg><svg width="14" height="16"><use href="#wmax"/></svg><svg width="12" height="16"><use href="#wx"/></svg></div>
    <div class="details"><div class="grid" id="grid"></div><div class="scroll"><i></i></div></div>
  </aside>
  <section class="right">
    <div class="toolbar" id="toolbar">
      <i class="grip"></i>
      <b><svg><use href="#zprev"/></svg></b><b><svg><use href="#znext"/></svg></b><u></u>
      <b><svg><use href="#cubed"/></svg></b><b><svg><use href="#cubel"/></svg></b><b class="on"><svg><use href="#swap"/></svg></b><u></u>
      <b><svg><use href="#boxa"/></svg></b><b><svg><use href="#boxb"/></svg></b><u></u>
      <b><svg><use href="#rot"/></svg></b><i class="dd wide"></i>
      <b><svg><use href="#pan"/></svg></b><b><svg><use href="#zfit"/></svg></b><b><svg><use href="#zin"/></svg></b><b><svg><use href="#zbox"/></svg></b><b><svg><use href="#zgreen"/></svg></b><u></u>
      <span class="tsel" data-w="38">Select</span>
      <b class="tmode"><svg><use href="#modei"/></svg></b><span data-w="40">Mode</span><i class="dd"></i>
      <b class="tfirst"><svg><use href="#sfil"/></svg></b><b><svg><use href="#sv"/></svg></b><b><svg><use href="#se"/></svg></b><b class="on"><svg><use href="#sf"/></svg></b><b><svg><use href="#sb"/></svg></b><b><svg><use href="#sn"/></svg></b><b><svg><use href="#snf"/></svg></b><b><svg><use href="#sne"/></svg></b><b><svg><use href="#xyz"/></svg></b><b><svg><use href="#lbl"/></svg></b><b><svg><use href="#abc"/></svg></b><u></u>
      <b><svg><use href="#clip"/></svg></b><span data-w="66">Clipboard</span><i class="dd"></i>
      <span class="tempty" data-w="60">[ Empty ]</span><u></u>
      <b class="text"><svg><use href="#extend"/></svg></b><span data-w="46">Extend</span><i class="dd"></i>
      <b class="tby"><svg><use href="#pinm"/></svg></b><span data-w="59">Select By</span><i class="dd"></i>
      <b class="tconv"><svg><use href="#conv"/></svg></b><span data-w="53">Convert</span><i class="dd"></i>
      <svg class="more" viewBox="0 0 8 5"><path d="M0 0h8L4 5z" fill="#222"/></svg>
    </div>
    <svg class="scene" width="1485" height="562" viewBox="435 203.500 1485 562">
      <rect x="435" y="203" width="1485" height="563" fill="url(#sky)"/>
      <g fill="none" stroke="#000" stroke-width="1.400" id="frame"></g>
      <path id="mesh" fill="none" stroke="#000" stroke-width="1.100"/>
      <path id="core" fill="none" stroke="#000" stroke-width="1"/>
      <path d="M1013 238h29M1254 238h25M1013 708h29M1254 708h25" stroke="#1fe4f5" stroke-width="2"/>
      <path d="M958 238h55M1042 238h55M1196 238h30M1279 238h56M958 708h55M1042 708h55M1196 708h30M1279 708h56" stroke="#17b9c9" stroke-width="1.600" stroke-dasharray="2 1"/>
      <path d="M1020.500 714.500H1334v9.500h-313.500z" fill="none" stroke="#000" stroke-width="1.300"/>
      <path d="M1020 714h78v10.500h-78zM1177 714h79v10.500h-79z"/>
      <g font-family="Open Sans, sans-serif" font-size="13.500">
        <text x="1007" y="710" textLength="26">0.00</text><text x="1155" y="710" textLength="42">500.00</text><text x="1310" y="710" textLength="89">1000.00 (mm)</text>
        <text x="1077" y="740.500" textLength="41">250.00</text><text x="1236" y="740.500" textLength="41">750.00</text>
      </g>
      <g fill="none" stroke="#a5214f" stroke-width="1.300">
        <path d="m1336 381 12-14 12-7 20-5 21 4 18 11 11 17 4 23-4 19-12 20-18 11M1358 458l-14-11-9-12"/>
        <path d="m1336 381-5 10-4 20 3 16 6 10" stroke="#159b9e"/>
        <path d="m1358 458 22 6 20-4" stroke="#cf8068"/>
        <path d="m1380.500 383 14 4 9 9 4 14-4 12-9 10-14 5-14-5-9-10-4-12 4-14 9-9zM1360 410.500h40M1380.500 390v40"/>
      </g>
      <g class="brand" fill="#fff">
        <path d="M1769 248 1786 214h10l-14 34zM1794 228l4-13 11 33h-12l-5-16z"/>
        <text x="1809" y="248" font-family="Open Sans, sans-serif" font-weight="700" font-size="42" textLength="100" lengthAdjust="spacingAndGlyphs">nsys</text>
        <text x="1828" y="279" font-family="Lato, sans-serif" font-weight="700" font-size="23" textLength="82" lengthAdjust="spacingAndGlyphs">2022 R1</text>
        <path d="M1767 287.500h142v1.500h-142z"/>
        <text x="1785" y="315" font-family="Lato, sans-serif" font-weight="700" font-size="22.500" textLength="108" lengthAdjust="spacingAndGlyphs">STUDENT</text>
      </g>
      <path d="M1811 667v-64" stroke="#0c7a14" stroke-width="4"/><path d="m1811 588 8 19h-16z" fill="#0a8a14"/>
      <path d="M1811 667.500h62" stroke="#c01010" stroke-width="4"/><path d="m1889 667.500-18-7v14z" fill="#c41414"/>
      <circle cx="1811" cy="667.500" r="8" fill="#1616a8"/><path d="M1812 658h7l-6 8h7" fill="none" stroke="#3a3af0" stroke-width="1.200"/>
      <circle cx="1848" cy="631" r="8" fill="#0fb3bd"/><circle cx="1845.500" cy="628.500" r="3" fill="#6fe4ea"/>
      <g font-family="Open Sans, sans-serif" font-size="14"><text x="1811" y="576" fill="#0a9a3a">Y</text><text x="1902" y="668" fill="#e02020">X</text></g>
    </svg>
    <div class="messages">
      <div class="phead mhead"><span data-w="63">Messages</span><i class="dots"></i><svg width="10" height="16"><use href="#wmenu"/></svg><svg width="10" height="16"><use href="#wpin"/></svg><svg width="12" height="16"><use href="#wx"/></svg></div>
      <div class="mtable">
        <div class="mrow mh"><span></span><span><em data-w="26">Text</em></span><span><em data-w="74">Association</em></span><span><em data-w="69">Timestamp</em></span></div>
        <div class="mrow"><span class="warn"><em data-w="55">Warninc</em></span><span><em data-w="574">Pre-inflation layer generation has stopped because of side face limitation, proximity collis</em></span><span><em data-w="225">Project&gt;Model&gt;Geometry&gt;Interior</em></span><span><em data-w="218">Saturday, July 2, 2022 12:41:53 AM</em></span></div>
      </div>
    </div>
  </section>
</main>

<footer class="status">
  <span class="ready" data-w="40">Ready</span>
  <svg width="20" height="22" viewBox="0 0 20 22"><path d="M1 6h18v11H9l-5 5v-5H1z" fill="#ffd36a"/><circle cx="11.500" cy="8" r="7" fill="#1b1fc0"/><path d="M10 7h2v5M9.500 12h4M11.500 3.500v2" stroke="#fff" stroke-width="2" fill="none"/></svg>
  <span class="s1" data-w="69">1 Message</span><span class="s2" data-w="83">No Selection</span>
  <svg class="s3" width="11" height="7" viewBox="0 0 11 7"><path d="M0 7h11L5.500 0z" fill="#fff"/></svg>
  <span class="s4" data-w="201">Metric (mm, kg, N, s, mV, mA)</span><span class="s5" data-w="53">Degrees</span><span class="s6" data-w="34">rad/s</span><span class="s7" data-w="46">Celsius</span>
</footer>

<div class="taskbar">
  <svg class="wall" width="1920" height="60" viewBox="0 1020 1920 60">
    <path d="M0 1020h1920v60H0z" fill="#170f1a"/>
    <g filter="url(#soft)">
      <path d="M325 1010h340l-20 80H310z" fill="#98161f"/><path d="M320 1010h50v80h-50z" fill="#5e1a18"/>
      <path d="M530 1010h145l-25 80H500z" fill="#8f1c4c"/><path d="M600 1010h75l-20 60h-70z" fill="#b04a74"/>
      <path d="M1318 1010h400v80h-400z" fill="#6b0440"/><path d="M1330 1010h60v80h-60z" fill="#8a3f50"/>
      <path d="M1690 1010h240v80h-250z" fill="#7a0a12"/><path d="M1900 1020l30 30v-30z" fill="#906068"/>
      <path d="M1375 1020h45l70 70h-50z" fill="#fff"/><path d="M1370 1045l60 45h-80z" fill="#6a4a80"/><ellipse cx="1645" cy="1078" rx="50" ry="16" fill="#8a1070"/>
    </g>
    <g filter="url(#soft2)">
      <path d="M410 1090 470 1020h36l-14 70z" fill="#ff5233"/><path d="M436 1088l40-38 8 38z" fill="#ff8a70"/><path d="m515 1090 30-65h10l-30 65z" fill="#b4606e"/>
      <path d="m255 1070 18-40 14-4-14 40z" fill="#b8653f"/><ellipse cx="300" cy="1062" rx="14" ry="18" fill="#4c2450"/><ellipse cx="306" cy="1078" rx="10" ry="9" fill="#df8058"/>
      <path d="M1458 1090q20-35 50-32 30 4 50 32z" fill="#ff9440"/>
      <path d="m1628 1018 22-4 84 72h-24z" fill="#e8a0dc"/><path d="m1720 1040 70 50h-14l-70-50z" fill="#a04c58"/>
      <path d="M0 1016h1920v6H0z" fill="#2a78b8" opacity=".7"/>
    </g>
  </svg>
  <div class="apps">
    <span><svg viewBox="0 0 30 30"><path d="M1 1h13.500v13.500H1zM15.500 1H29v13.500H15.500zM1 15.500h13.500V29H1zM15.500 15.500H29V29H15.500z" fill="url(#win)"/></svg></span>
    <span><svg viewBox="0 0 30 30"><circle cx="17" cy="12" r="10" fill="none" stroke="#eee" stroke-width="2.800"/><path d="m10 19-7 8" stroke="#ddd" stroke-width="3.500"/></svg></span>
    <span><svg viewBox="0 0 30 30"><path d="M0 2h10l3 4h12v10H0z" fill="#dd9a0a"/><path d="M0 8h10l3-3h17v22H0z" fill="#ffd251"/><path d="M5 20h20v8H5z" fill="#1177c8"/><path d="M9 23.500h12" stroke="#0a4a80" stroke-width="1.500"/></svg></span>
    <span><svg viewBox="0 0 30 30"><circle cx="15" cy="15" r="14" fill="#1ed760"/><path d="M7 10.500q9-3 16.500 1.500M8 15.500q8-2.500 14 1.500M9 20q6-2 11.500 1.300" fill="none" stroke="#132" stroke-width="2.600" stroke-linecap="round"/></svg></span>
    <span><svg viewBox="0 0 30 30"><path d="M7 25q-1-7 1-10l2-2 1-3 2 2 2-3 2 3 2-2 1 3 2 2q2 3 1 10z" fill="#ffb01f"/><path d="M8 18.500h2l2-3 2 5 2-5 2 5 2-3h2" stroke="#e02b10" fill="none" stroke-width="3"/><path d="M3.500 19C1 9 7 2.500 15 2.500S29 9 26.500 19" fill="none" stroke="#0b17c9" stroke-width="2.400"/><rect x="2" y="15" width="4.500" height="10" rx="2" fill="#0b17c9"/><rect x="23.500" y="15" width="4.500" height="10" rx="2" fill="#0b17c9"/></svg></span>
    <span><svg viewBox="0 0 30 30"><circle cx="17" cy="6" r="5" fill="#7b83eb"/><circle cx="26" cy="7.500" r="3" fill="#5059c9"/><path d="M11 11h13v12q-2 5-7 5t-6-6zM23 12h7v9q-2 4-6 3z" fill="#6a72dc"/><rect y="8" width="15" height="15" rx="2" fill="#4450b4"/><path d="M4 12h8M8 12v8" stroke="#fff" stroke-width="2.200"/></svg></span>
    <span class="run"><svg viewBox="0 0 30 30"><path d="m9 1 12 0 3 3 3 0-1 6 1 3-4 11-8 6-8-6L3 13l1-3-1-6h3z" fill="#ff4a1f"/><path d="m8 6 7 2 7-2 3 5-4 8-3 5-3 2-3-2-3-5-4-8z" fill="#fff"/><path d="m8 11 5 2-1 3zM22 11l-5 2 1 3zM15 10v7l-3 3h6l-3-3M15 20v3" fill="#ff4a1f" stroke="#ff4a1f" stroke-width="1.300"/></svg></span>
    <span><svg viewBox="0 0 30 30"><path d="M0 0h30v30H0z" fill="#0f79b6"/><g fill="#fff" font-family="Open Sans" font-size="8.500" font-weight="700"><text x="5" y="11" textLength="20">prime</text><text x="5" y="19" textLength="20">video</text></g><path d="M8 22q7 4 14 0" stroke="#fff" stroke-width="1.500" fill="none"/></svg></span>
    <span><svg viewBox="0 0 30 30"><circle cx="15" cy="15" r="14" fill="#fbc116"/><path d="M2.900 8A14 14 0 0 1 27.100 8H15L9 18.500z" fill="#e33b2e"/><path d="M2.900 8A14 14 0 0 0 14 29l6-10-11-.5z" fill="#229a48"/><circle cx="15" cy="15" r="6.800" fill="#fff"/><circle cx="15" cy="15" r="5.200" fill="#3a7ee8"/></svg></span>
    <span><svg viewBox="0 0 30 30"><path d="M0 30 2 22A14.500 14.500 0 1 1 8 28z" fill="#fff"/><path d="M3.500 26.500 5 21.500a12 12 0 1 1 4 4z" fill="#3cc455"/><path d="M9 9q2-3 3.500 0l1 3-1.500 2q2 3.500 5 4.500l2-2 4 2q0 4-4.500 4.500Q11 22 9 14z" fill="#fff"/></svg></span>
    <span><svg viewBox="0 0 30 30"><rect x="3.500" y="3.500" width="23" height="23" rx="2" fill="#6c6c6c"/><ellipse cx="15" cy="15" rx="3.600" ry="4.600" fill="none" stroke="#333" stroke-width="2"/></svg></span>
    <span class="run"><svg viewBox="0 0 30 30"><circle cx="15" cy="15" r="14.500" fill="#1b7fd0"/><path d="M1 12C4-1 26-4 29.500 13c.5 6-4 9-9 8-5-2-2-4-2-6 0-8-13-9-17.500-3z" fill="url(#edgeg)"/><path d="M20 21q-8-1-8-8-6 4-3 10 4 6 11 5 5-2 7-6-4 0-7-1z" fill="#0c55a0"/></svg></span>
    <span class="run"><svg viewBox="0 0 30 30"><path d="M0 0h30v30H0z"/><path d="m15 2 4 2v5l-4 2-4-2V4zM10 10l4 2v5l-4 2-4-2v-5zM20 10l4 2v5l-4 2-4-2v-5zM11 4l4 2 4-2M15 6v5M6 12l4 2 4-2M10 14v5M16 12l4 2 4-2M20 14v5" fill="none" stroke="#f2a81d" stroke-width="1.300"/><text x="5.500" y="28.500" fill="#fff" font-family="Open Sans" font-size="10.500" font-weight="700">WB</text></svg></span>
    <span class="run cur"><svg viewBox="0 0 30 30"><path d="M0 0h30v30H0z"/><use href="#gears" x="4" y="0" width="21" height="21"/><text x="10" y="28.500" fill="#fff" font-family="Open Sans" font-size="10.500" font-weight="700">M</text></svg></span>
    <span class="run"><svg viewBox="0 0 30 30"><rect width="22" height="22" rx="3" fill="#e9e9ee"/><path d="M4 4h14v6M4 4v12h5" stroke="#d83b1a" stroke-width="2.600" stroke-dasharray="3 1.800" fill="none"/><path d="M16 8v14M9 17h16" stroke="#888" stroke-width="2.500"/><circle cx="27" cy="16" r="3" fill="none" stroke="#1c9ce8" stroke-width="2"/><circle cx="16" cy="26" r="3" fill="none" stroke="#1c9ce8" stroke-width="2"/></svg></span>
  </div>
  <div class="tray">
    <svg width="18" height="12" viewBox="0 0 18 12"><path d="m1.500 10 7.500-8 7.500 8" fill="none" stroke="#fff" stroke-width="1.500"/></svg>
    <b class="hundred" data-w="23">100</b>
    <svg class="kb" width="20" height="14" viewBox="0 0 20 14"><rect x=".7" y=".7" width="18.600" height="12.600" rx="2" fill="none" stroke="#fff" stroke-width="1.300"/><path d="M4 4.500h12M5.500 7.500h9" stroke="#fff" stroke-width="1.500" stroke-dasharray="1.500 1.500"/><path d="M6 10.500h8" stroke="#fff" stroke-width="1.200"/></svg>
    <div class="lang"><span data-w="29">ENG</span><span data-w="15">IN</span></div>
    <svg class="wifi" width="84" height="20" viewBox="0 0 84 20"><g fill="none" stroke="#fff" stroke-width="1.700"><path d="M1 8q9.500-9 19 0M4 11.500q6.500-6 13 0M7 14.500q3.500-3.500 7 0"/><circle cx="10.500" cy="17" r="1.200" fill="#fff"/><path d="M30 7h3l5-4v14l-5-4h-3zM41 7q2 3 0 6M44 5q4 5 0 10"/><path d="M47 3q5 7 0 14" opacity=".4"/><path d="M70 5h8.500v10.500H66V12M80.500 8v5M61 6v3l2 2h3l2-2V6zM63 6V2M66.500 6V2M64.500 11v4h2"/><path d="M69.500 8h6v5h-6z" fill="#fff"/></g></svg>
    <div class="clock"><span data-w="36">00:43</span><span data-w="78">02-07-2022</span></div>
    <span class="badge">2</span>
  </div>
</div>
<script src="app.js"></script>
</body>
</html>
```
FILE: styles.css
```css
* { box-sizing: border-box; }
body { margin: 0; width: 1920px; height: 1080px; overflow: hidden; display: flex; flex-direction: column; font: 14px/18px "Open Sans", "Noto Sans", sans-serif; color: #222; background: #eeeef2; }
svg { display: block; flex: none; }
.paints { position: absolute; }
.symbols { display: none; }
[data-w] { white-space: nowrap; display: inline-block; flex: none; }
.dd { flex: none; width: 0; height: 0; border: 4px solid transparent; border-top: 5px solid #777; border-bottom: 0; }

.titlebar { height: 33px; display: flex; flex: none; background: #eeeef0; }
.quick { width: 153px; height: 28px; display: flex; align-items: center; padding-left: 10px; }
.appicon { background: #000; width: 20px; height: 20px; }
.vline { width: 1px; height: 28px; background: #ccc; margin: 0 7px 0 9px; }
.qdrop { margin-left: 8px; margin-top: -3px; }
.context { width: 69px; border-top: 5px solid #2b5797; background: #d5e0f2; color: #3f6fc0; text-align: center; padding-top: 5px; }
.caption { margin-left: 549px; color: #555; padding-top: 9px; }
.winbtns { margin-left: auto; margin-right: 14px; padding-top: 9px; }

.tabs { height: 29px; flex: none; display: flex; border-bottom: 1px solid #ccc; background: #eeeef0; }
.file { width: 70px; background: #0072c6; color: #fff; text-align: center; padding: 5px 0 0 1px; margin-right: 10px; }
.tab { padding-top: 7px; height: 29px; text-align: center; }
.tab.active { width: 71px; background: #fafafa; border: 1px solid #ccc; border-bottom: 0; padding-top: 6px; }
.t2 { width: 73px; } .t3 { width: 81px; } .t4 { width: 96px; } .t5 { width: 111px; }
.launch { margin-left: auto; width: 199px; height: 26px; margin-top: 1px; border: 1px solid #ccd; background: #fff; color: #999; padding: 4px 4px; }
.helpers { margin-left: 4px; margin-top: 2px; margin-right: 4px; }

.ribbon { height: 109px; flex: none; display: flex; background: #fafafa; border-bottom: 1px solid #ccc; padding-top: 8px; }
.group { height: 91px; border-right: 1px solid #ccc; display: flex; flex-direction: column; }
.g-outline { width: 220px; } .g-mesh { width: 79px; } .g-insert { width: 280px; } .g-tools { width: 644px; } .g-layout { width: 194px; }
.cols { display: grid; height: 75px; }
.g-outline .cols { grid-template-columns: 82px 63px 1fr; padding-left: 1px; }
.g-mesh .cols { grid-template-columns: 1fr; padding-left: 1px; }
.g-insert .cols { grid-template-columns: 149px 1fr; padding-left: 12px; }
.g-tools .cols { grid-template-columns: 64px 66px 83px 124px 168px 1fr; }
.g-layout .cols { grid-template-columns: 64px 1fr; }
.big { display: flex; flex-direction: column; align-items: center; padding-top: 2px; line-height: 14px; }
.g-outline .big { padding-left: 2px; }
.big.units { padding-left: 2px; }
.big svg { margin-bottom: 9px; }
.big svg[height="38"] { margin-top: -1px; margin-bottom: 8px; }
.big svg.kf { margin-top: 4px; margin-bottom: 13px; }
.big .dd { margin-top: 8px; }
.col { display: flex; flex-direction: column; }
.btn { height: 26.5px; display: flex; align-items: center; gap: 3px; padding-bottom: 4px; }
.btn svg { width: 18px; height: 18px; }
.btn .dd { margin-top: -4px; }
.dim { color: #9a9a9a; }
.dim .dd { border-top-color: #aaa; }
.gname { text-align: center; line-height: 18px; color: #444; padding-left: 2px; }
.g-outline .gname { padding-left: 5px; }

.work { display: flex; height: 824px; flex: none; }
.left { width: 430px; margin-right: 5px; display: flex; flex-direction: column; }
.phead { height: 25px; flex: none; display: flex; align-items: center; padding-left: 6px; padding-right: 9px; padding-bottom: 1px; color: #555; border-top: 1px solid #ccd; border-right: 1px solid #ccd; }
.phead svg { margin-left: 10px; }
.phead svg + svg + svg { margin-left: 9px; }
.phead svg + svg + svg + svg { margin-left: 7px; }
.phead .dots + svg { margin-left: 4px; }
.dots { flex: 1; height: 8px; margin-left: 6px; background-image: radial-gradient(circle at 1px 1px, #b8b8b8 0.8px, transparent 1px), radial-gradient(circle at 3px 3px, #b8b8b8 0.8px, transparent 1px); background-size: 5px 5px; }
.filter { height: 34px; flex: none; display: flex; align-items: center; }
.grip { flex: none; width: 8px; height: 24px; background-image: radial-gradient(circle at 1px 1px, #aaa 0.9px, transparent 1.1px), radial-gradient(circle at 3px 3px, #aaa 0.9px, transparent 1.1px); background-size: 5px 5px; margin-left: 12px; }
.combo { width: 124px; height: 28px; margin-left: 8px; background: #fff; border: 1px solid #ccd; display: flex; align-items: center; justify-content: space-between; padding: 0 4px 0 3px; }
.search { width: 113px; height: 28px; background: #fff; border: 1px solid #ccd; color: #aaa; padding: 4px 5px; margin-right: 6px; }
.filter .more { margin-left: 8px; margin-top: 11px; }
.tree { height: 427px; flex: none; background: #fff; position: relative; }
.tree .lines { position: absolute; left: 0; top: 0; }
.row { position: relative; height: 20px; display: flex; align-items: center; line-height: 20px; }
.l-1 { padding-left: 11px; font-weight: 700; }
.l0 { padding-left: 9px; font-weight: 700; }
.l1 { padding-left: 43px; } .l2 { padding-left: 76.5px; } .l3 { padding-left: 110px; }
.l-1 span, .l0 span { margin-left: 1px; }
.row .ex { width: 12px; height: 12px; margin-right: 12px; }
.row .mk { width: 10px; height: 12px; margin-right: 2px; margin-top: 7px; }
.row .ic { width: 18px; height: 18px; margin-right: 6px; }
.row.sel span { background: #f0f0f0; box-shadow: -2px 0 #f0f0f0, 2px 0 #f0f0f0; }
.details-head { margin-top: 10px; }
.details { flex: 1; display: flex; overflow: hidden; background: #eee; }
.grid { width: 408px; background: #fff; }
.drow { height: 22.5px; display: grid; grid-template-columns: 17px 193px 1fr; line-height: 21px; }
.drow > div { border-top: 1px solid #aaa; border-left: 1px solid #aaa; padding-left: 3.5px; white-space: nowrap; }
.drow > div:last-child { border-right: 1px solid #aaa; padding-left: 4px; }
.drow > .gut { border: 0; padding: 6px 0 0 2px; }
.drow .head.head { grid-column: 2 / 4; font-weight: 700; padding-left: 3px; }
.gut svg { width: 12px; height: 12px; }
.chk { display: inline-block; width: 15px; height: 15px; border: 1px solid #bbb; vertical-align: middle; margin-right: 4px; }
.scroll { flex: 1; }
.scroll i { display: block; width: 3px; height: 226px; margin: 21px 0 0 10px; background: #888; border-radius: 2px; }

.right { width: 1485px; display: flex; flex-direction: column; }
.toolbar { height: 32px; flex: none; display: flex; align-items: center; background: #eeeef2; }
.toolbar b { width: 27.5px; height: 28px; flex: none; display: flex; align-items: center; justify-content: center; }
.toolbar b svg { width: 18px; height: 18px; }
.toolbar b.on { border: 2px solid #4c9cf0; background: #e4effb; }
.toolbar u { width: 1px; height: 26px; background: #ccc; margin: 0 3px; flex: none; }
.toolbar .grip { margin-right: 7.5px; }
.dd.wide { margin: 0 3.5px; }
.toolbar .tsel { margin: 0 4px 0 5px; }
.toolbar .tfirst { margin-left: 11px; }
.toolbar .tempty { margin: 0 4px 0 15px; }
.toolbar .text { margin-left: 1px; }
.toolbar .tby { margin-left: 11px; }
.toolbar .tconv { margin-left: 10px; }
.toolbar .more { width: 8px; height: 5px; margin: 18px 0 0 12px; }
.scene { width: 1485px; height: 562px; }
.messages { margin-top: 5px; flex: 1; background: #a0a0a0; }
.mhead { background: #eeeef2; padding-bottom: 2px; }
.mtable { width: 1300px; }
.mrow { display: grid; grid-template-columns: 62px 581px 382px 275px; height: 18px; background: #fff; border-bottom: 1px solid #999; }
.mrow > span { border-right: 1px solid #888; padding-left: 4px; line-height: 19px; overflow: hidden; }
.mrow > .warn, .mh { background: #f0f0f0; }
.mh { height: 19px; }
.mh > span { line-height: 20px; }
.mrow em { font-style: normal; }

.status { height: 25px; flex: none; background: #0079ce; color: #dcebf8; display: flex; align-items: center; line-height: 24px; padding-top: 1px; }
.status .ready { margin-left: 10px; margin-right: 1239px; }
.s1 { margin-left: 3px; } .s2 { margin-left: 22px; } .s3 { margin-left: 27px; } .s4 { margin-left: 7px; } .s5 { margin-left: 15px; } .s6 { margin-left: 15px; } .s7 { margin-left: 15px; }

.taskbar { height: 60px; flex: none; position: relative; color: #fff; display: flex; align-items: center; }
.wall { position: absolute; left: 0; top: 0; }
.apps { position: relative; display: flex; height: 60px; padding: 5px 0 0 551px; gap: 5px; }
.apps span { width: 50px; height: 50px; padding: 10px; display: flex; flex-direction: column; align-items: center; }
.apps svg { width: 30px; height: 30px; }
.run::after { content: ""; width: 7px; height: 4px; flex: none; border-radius: 2px; background: #999; margin-top: 5px; }
.apps .cur { background: rgba(255, 255, 255, .07); border-radius: 5px; outline: 1px solid rgba(255, 255, 255, .08); }
.cur::after { width: 20px; background: #f4826b; }
.tray { position: relative; display: flex; align-items: center; margin-left: 155px; height: 60px; }
.hundred { margin-left: 9px; font-weight: 600; }
.kb { margin-left: 13px; }
.lang { margin-left: 24px; display: flex; flex-direction: column; align-items: center; font-size: 15px; line-height: 20px; }
.wifi { margin-left: 23px; }
.clock { margin-left: 15px; display: flex; flex-direction: column; align-items: flex-end; font-size: 15px; line-height: 20px; }
.badge { width: 20px; height: 20px; border-radius: 50%; background: #f4826b; color: #222; text-align: center; font-size: 13px; line-height: 20px; margin-left: 14px; }
```
FILE: app.js
```js
const use = (id, cls) => `<svg class="${cls}">${id ? `<use href="#${id}"/>` : ''}</svg>`;

// Outline tree: level, expander, state mark, icon, label, label width
const rows = [
  [-1, 0, 0, 'book', 'Project*', 59], [0, 'minus', 0, 'fcube', 'Model (A3)', 77],
  [1, 'minus', 'ok', 'fcube', 'Geometry Imports', 109], [2, 0, 'ok', 'geoimp', 'Geometry Import (A2)', 133],
  [1, 'minus', 'ok', 'geo', 'Geometry', 59], [2, 0, 'xb', 'cube', 'Exterior', 47],
  [2, 'minus', 'okx', 'geo', 'Interior', 45], [3, 0, 'okx', 'cube', 'Component3\\Solid6', 117],
  [3, 0, 'okx', 'cube', 'Component4\\Solid4', 117], [3, 0, 'okx', 'cube', 'int', 16],
  [1, 0, 'ok', 'fmat', 'Materials', 54], [1, 'plus', 'ok', 'coord', 'Coordinate Systems', 121],
  [1, 'plus', 'ok', 'fcon', 'Connections', 74], [1, 'minus', 'ok', 'meshi', 'Mesh', 32],
  [2, 0, 'ok', 'sizing', 'Body Sizing', 68], [2, 0, 'ok', 'sizing', 'Face Sizing', 67],
  [2, 0, 'ok', 'infl', 'Inflation', 50], [1, 'plus', 0, 'namedc', 'Named Selections', 105],
];
document.getElementById('tree').innerHTML =
  `<svg class="lines" width="430" height="427" viewBox="0 230 430 427"><path d="M15.5 250v4M22 260.5h12M49.5 270v311M49.5 280.5h18M83.5 290v10.5h18M49.5 320.500h18M83.5 330v30M83.5 340.5h18M83.5 360.5h18M117.5 370v50.5h18M117.5 380.5h18M117.5 400.5h18M49.5 440.5h18M49.5 460.5h18M49.5 480.5h18M49.5 500.5h18M83.5 510v50.5h18M83.5 520.5h18M83.5 540.5h18M49.5 580.5h18" fill="none" stroke="#999" stroke-dasharray="1 1"/></svg>` +
  rows.map(([l, ex, mk, ic, t, w]) =>
    `<div class="row l${l}${t === 'Mesh' ? ' sel' : ''}">${l < 0 ? '' : use(ex, 'ex') + use(mk, 'mk')}${use(ic, 'ic')}<span data-w="${w}">${t}</span></div>`).join('');

// Details grid: section headings carry an expander, properties a value
const props = [
  ['minus', 'Display', 47], [0, 'Display Style', 80, 'Use Geometry Setting', 138], ['minus', 'Defaults', 54],
  [0, 'Physics Preference', 116, 'CFD', 26], [0, 'Solver Preference', 109, 'Fluent', 41],
  [0, 'Element Order', 92, 'Linear', 39], [1, 'Element Size', 80, 'Default (172.34 mm)', 126],
  [0, 'Export Format', 90, 'Standard', 58], [0, 'Export Preview Surface Mesh', 183, 'No', 18],
  ['plus', 'Sizing', 39], ['plus', 'Quality', 47], ['plus', 'Inflation', 55], ['plus', 'Batch Connections', 121], ['plus', 'Advanced', 64],
];
document.getElementById('grid').innerHTML = props.map(([e, k, w, v, vw]) => v
  ? `<div class="drow"><div class="gut"></div><div>${e ? '<i class="chk"></i>' : ''}<span data-w="${w}">${k}</span></div><div><span data-w="${vw}">${v}</span></div></div>`
  : `<div class="drow"><div class="gut">${use(e, '')}</div><div class="head"><span data-w="${w}">${k}</span></div></div>`).join('');

document.querySelectorAll('[data-w]').forEach(el => {
  const natural = el.getBoundingClientRect().width;
  el.style.letterSpacing = ((el.dataset.w - natural) / el.textContent.length).toFixed(3) + 'px';
});

// Wireframe mesh: triangulated surfaces of revolution seen side-on
let seed = 7;
const rnd = () => (seed = (seed * 16807) % 2147483647) / 2147483647 - 0.5;
function surface(cx, n, ys, radius, jx, jy, tilt = 0) {
  const last = ys.length - 1;
  const pts = ys.map((y, j) => Array.from({ length: n }, (_, i) => {
    const edge = j === 0 || j === last;
    const a = 2 * Math.PI * (i + (j % 2) / 2 + (edge ? 0 : rnd() * jx)) / n;
    return [cx + radius(y) * Math.sin(a), y + (edge ? 0 : rnd() * jy + tilt * Math.cos(a))];
  }));
  let d = '';
  const line = (p, q) => { d += `M${p[0].toFixed(1)} ${p[1].toFixed(1)}L${q[0].toFixed(1)} ${q[1].toFixed(1)}`; };
  pts.forEach((r, j) => r.forEach((p, i) => {
    line(p, r[(i + 1) % n]);
    if (j < last) {
      line(p, pts[j + 1][i]);
      line(p, pts[j + 1][(i + (j % 2 ? 1 : n - 1)) % n]);
    }
  }));
  return d;
}
const steps = (a, b, n) => Array.from({ length: n + 1 }, (_, i) => a + (b - a) * i / n);
const profile = table => y => {
  for (let i = 1; i < table.length; i++) if (y <= table[i][0]) {
    const [y0, r0] = table[i - 1], [y1, r1] = table[i];
    return r0 + (r1 - r0) * (y - y0) / (y1 - y0);
  }
  return table[table.length - 1][1];
};
const bulb = profile([[345, 45], [370, 62], [390, 80], [420, 100], [450, 110], [475, 113], [510, 110], [560, 97], [600, 78], [629, 62]]);
const funnel = profile([[315, 64], [350, 45], [400, 28], [440, 22], [560, 14], [629, 6]]);
const cylinder = [238, 268, ...steps(289, 655, 18), 682, 708];
document.getElementById('mesh').setAttribute('d',
  surface(1146.5, 32, cylinder, () => 188, .35, 5, 2) +
  surface(1146.5, 32, cylinder, () => 187, .5, 8, 2) +
  surface(1146.5, 14, steps(268, 670, 18), () => 120 + rnd() * 110, .9, 12));
document.getElementById('core').setAttribute('d',
  surface(1148, 26, steps(345, 629, 19), bulb, .8, 9) +
  surface(1148, 24, steps(450, 629, 14), y => bulb(y) * .93, .7, 8) +
  surface(1148, 14, steps(400, 620, 11), y => bulb(y) * .65, .9, 14) +
  surface(1146, 20, steps(315, 629, 34), funnel, .8, 8) +
  surface(1146, 14, steps(315, 610, 30), y => funnel(y) * .82, .9, 9) +
  surface(1146, 10, steps(330, 590, 28), y => funnel(y) * .5, .9, 9) +
  'M1081 315.5h129M1081 316.5h129M1084 629.5h128');
const xs = [958.5, 961.5, 973, 990.5, 1013, 1042, 1074.5, 1109.5, 1146.5, 1183, 1218, 1250.5, 1279.5, 1303, 1320.5, 1330.5, 1334.5];
document.getElementById('frame').innerHTML =
  `<path d="M958 204.5h377M958 238.5h377M958 708h377M958 740.5h377${xs.map(x => `M${x} 204v34M${x} 708v58`).join('')}M958.5 204v562M1334.5 204v562"/>
   <path d="M960 240v465M1333 240v465" stroke-width="3"/>`;
```
